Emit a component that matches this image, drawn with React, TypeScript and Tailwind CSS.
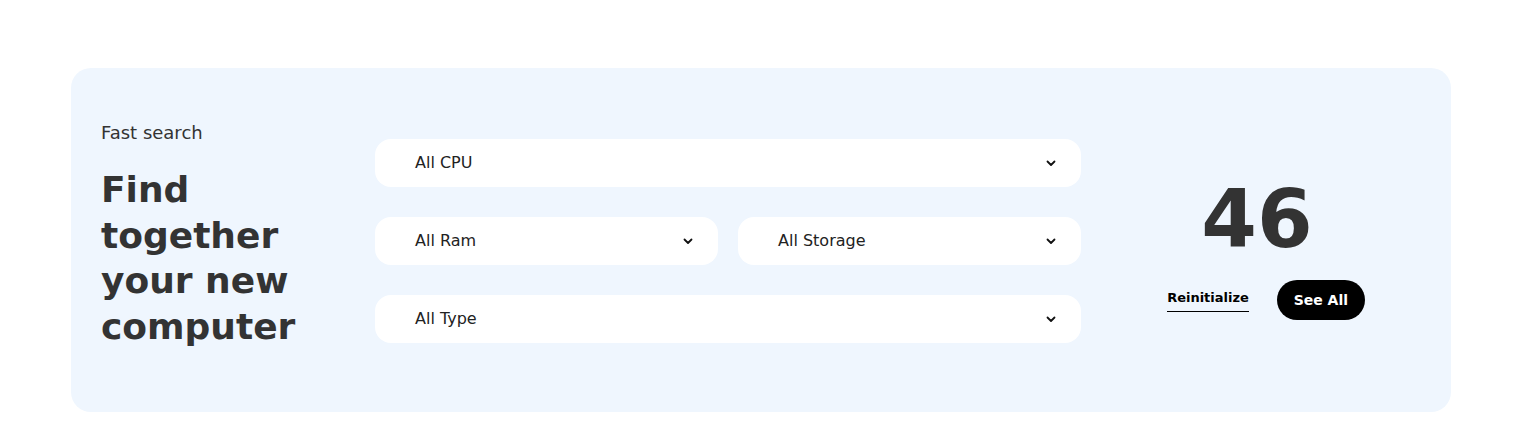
import React from "react";

const Chevron = () => (
  <svg width="10" height="7" viewBox="0 0 10 7" fill="none">
    <path d="M1.5 1.5 L5 5 L8.5 1.5" stroke="#111" strokeWidth="1.8" strokeLinecap="round" strokeLinejoin="round" />
  </svg>
);

const Select = ({ label, className = "" }: { label: string; className?: string }) => (
  <div className={`h-[48px] bg-white rounded-[16px] flex items-center justify-between pl-[40px] pr-[25px] ${className}`}>
    <span className="text-[16px] text-[#222]">{label}</span>
    <Chevron />
  </div>
);

export default function App() {
  return (
    <div className="w-[1533px] h-[445px] bg-white pt-[68px] pl-[71px]" style={{ fontFamily: '"DejaVu Sans", "Open Sans", sans-serif' }}>
      <div className="w-[1380px] h-[344px] bg-[#eff6fe] rounded-[20px] flex items-center pl-[30px]">
        <div className="w-[274px] flex flex-col pb-[9px]">
          <div className="text-[18px] text-[#333] leading-[22px]">Fast search</div>
          <div className="mt-[23px] text-[36px] font-bold text-[#333] leading-[45.5px]">
            Find
            <br />
            together
            <br />
            your new
            <br />
            computer
          </div>
        </div>
        <div className="w-[706px] flex flex-col gap-[30px] mt-[2px]">
          <Select label="All CPU" />
          <div className="flex gap-[20px]">
            <Select label="All Ram" className="flex-1" />
            <Select label="All Storage" className="flex-1" />
          </div>
          <Select label="All Type" />
        </div>
        <div className="flex-1 flex flex-col items-center mt-[22px]">
          <div className="text-[80px] font-bold text-[#333] leading-[80px] mr-[18px] -mt-[2px]">46</div>
          <div className="flex items-center gap-[28px] mt-[20px]">
            <button className="text-[13px] font-semibold text-black border-b-[1.5px] border-black pb-[4px]">Reinitialize</button>
            <button className="h-[40px] w-[88px] rounded-full bg-black text-white text-[14px] font-semibold">See All</button>
          </div>
        </div>
      </div>
    </div>
  );
}
